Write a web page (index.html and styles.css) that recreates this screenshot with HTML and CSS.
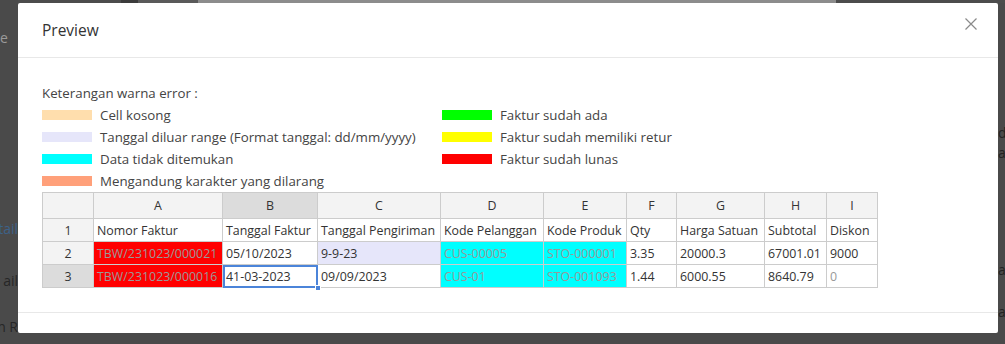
FILE: index.html
```html
<!DOCTYPE html>
<html>
<head>
<meta charset="utf-8">
<link rel="stylesheet" href="styles.css">
</head>
<body>
<div class="page">
  <div class="topstrip">
    <div class="ts ts-dark" style="width:105px"></div>
    <div class="ts ts-line" style="width:17px"></div>
    <div class="ts ts-mid" style="width:61px"></div>
    <div class="ts ts-light" style="width:650px"></div>
    <div class="ts ts-dark" style="width:172px"></div>
  </div>
  <div class="sides">
    <div class="side-left">
      <span class="sl sl-1">e</span>
      <span class="sl sl-2">tail</span>
      <span class="sl sl-3">ail</span>
      <span class="sl sl-4">n R</span>
    </div>
    <div class="side-right">
      <span class="sr sr-1">d</span>
      <span class="sr sr-2">a</span>
      <span class="sr sr-3">a</span>
      <span class="sr sr-4">a</span>
    </div>
  </div>
</div>

<div class="modal">
  <div class="modal-header">
    <h2 class="modal-title">Preview</h2>
    <button class="close" aria-label="Close">
      <svg width="12" height="12" viewBox="0 0 12 12"><path d="M0.5 0.5 L11.5 11.5 M11.5 0.5 L0.5 11.5" stroke="#8a8a8a" stroke-width="1.2" fill="none"/></svg>
    </button>
  </div>
  <div class="modal-body">
    <div class="legend-title">Keterangan warna error :</div>
    <div class="legend">
      <div class="item"><span class="sw c-empty"></span>Cell kosong</div>
      <div class="item"><span class="sw c-range"></span>Tanggal diluar range (Format tanggal: dd/mm/yyyy)</div>
      <div class="item"><span class="sw c-notfound"></span>Data tidak ditemukan</div>
      <div class="item"><span class="sw c-char"></span>Mengandung karakter yang dilarang</div>
      <div class="item"><span class="sw c-exists"></span>Faktur sudah ada</div>
      <div class="item"><span class="sw c-retur"></span>Faktur sudah memiliki retur</div>
      <div class="item"><span class="sw c-lunas"></span>Faktur sudah lunas</div>
    </div>
    <table class="sheet">
      <colgroup>
        <col style="width:51px"><col style="width:129px"><col style="width:95px"><col style="width:123px"><col style="width:103px"><col style="width:83px"><col style="width:50px"><col style="width:88px"><col style="width:62px"><col style="width:51px">
      </colgroup>
      <thead>
        <tr class="colhead">
          <th></th><th>A</th><th class="sel">B</th><th>C</th><th>D</th><th>E</th><th>F</th><th>G</th><th>H</th><th>I</th>
        </tr>
      </thead>
      <tbody>
        <tr>
          <th class="rowhead">1</th>
          <td>Nomor Faktur</td><td>Tanggal Faktur</td><td>Tanggal Pengiriman</td><td>Kode Pelanggan</td><td>Kode Produk</td><td>Qty</td><td>Harga Satuan</td><td>Subtotal</td><td>Diskon</td>
        </tr>
        <tr>
          <th class="rowhead">2</th>
          <td class="ro c-lunas">TBW/231023/000021</td><td>05/10/2023</td><td class="c-range">9-9-23</td><td class="ro c-notfound">CUS-00005</td><td class="ro c-notfound">STO-000001</td><td>3.35</td><td>20000.3</td><td>67001.01</td><td>9000</td>
        </tr>
        <tr>
          <th class="rowhead sel">3</th>
          <td class="ro c-lunas">TBW/231023/000016</td><td class="active">41-03-2023</td><td>09/09/2023</td><td class="ro c-notfound">CUS-01</td><td class="ro c-notfound">STO-001093</td><td>1.44</td><td>6000.55</td><td>8640.79</td><td class="ro">0</td>
        </tr>
      </tbody>
    </table>
  </div>
  <div class="modal-footer"></div>
</div>
</body>
</html>
```

FILE: styles.css
```css
html, body {
  margin: 0;
  padding: 0;
}
body {
  width: 1005px;
  height: 344px;
  overflow: hidden;
  background: #4a4a4a;
  font-family: "Open Sans", "Noto Sans", sans-serif;
  color: #333;
}
.page {
  height: 344px;
  display: flex;
  flex-direction: column;
}
.topstrip {
  display: flex;
  height: 3px;
  padding-left: 18px;
}
.ts { height: 3px; }
.ts-dark { background: #4c4c4c; }
.ts-line { background: #3c3c3c; }
.ts-mid { background: #5a5a5a; }
.ts-light { background: #8c8c8c; }
.sides {
  flex: 1;
  display: flex;
  justify-content: space-between;
}
.side-left {
  width: 18px;
  display: flex;
  flex-direction: column;
  align-items: flex-end;
  font-size: 14px;
  white-space: nowrap;
}
.sl { display: block; line-height: 20px; }
.sl-1 { margin-top: 25px; color: #9a9a9a; align-self: flex-start; }
.sl-2 { margin-top: 171px; color: #3d6289; }
.sl-3 { margin-top: 32px; color: #262626; }
.sl-4 { margin-top: 26px; color: #262626; }
.side-right {
  width: 7px;
  overflow: hidden;
  display: flex;
  flex-direction: column;
  font-size: 14px;
  padding-left: 1px;
}
.sr { display: block; line-height: 20px; color: #222; }
.sr-1 { margin-top: 120px; }
.sr-2 { margin-top: 0; }
.sr-3 { margin-top: 97px; }
.sr-4 { margin-top: 22px; }

.modal {
  position: fixed;
  left: 18px;
  top: 3px;
  width: 980px;
  background: #fff;
  border-radius: 2px;
}
.modal-header {
  height: 54px;
  border-bottom: 1px solid #e8e8e8;
  display: flex;
  justify-content: space-between;
  align-items: center;
  padding: 0 21px 0 24px;
}
.modal-title {
  margin: 0;
  font-size: 15.5px;
  font-weight: 500;
  color: #333;
}
.close {
  align-self: flex-start;
  margin-top: 15px;
  border: 0;
  padding: 0;
  background: none;
  width: 12px;
  height: 12px;
  display: flex;
}
.modal-body {
  padding: 24px 24px 24px 24px;
  font-size: 13.3px;
}
.legend-title {
  line-height: 22px;
  height: 22px;
  color: #444;
}
.legend {
  display: grid;
  grid-template-rows: repeat(4, 22px);
  grid-template-columns: 400px auto;
  grid-auto-flow: column;
}
.item {
  display: flex;
  align-items: center;
  color: #444;
  white-space: nowrap;
}
.sw {
  width: 50px;
  height: 10px;
  margin-right: 8px;
  flex: none;
}
.c-empty { background: #ffdead; }
.c-range { background: #e6e6fa; }
.c-notfound { background: #00ffff; }
.c-char { background: #ffa07a; }
.c-exists { background: #00ff00; }
.c-retur { background: #ffff00; }
.c-lunas { background: #ff0000; }

.sheet {
  border-collapse: collapse;
  table-layout: fixed;
  width: 835px;
  font-size: 12.4px;
}
.sheet th, .sheet td {
  border: 1px solid #cccccc;
  white-space: nowrap;
  overflow: hidden;
  padding: 0 3px;
  height: 22px;
  font-weight: normal;
  color: #333;
}
.sheet td { text-align: left; }
.colhead th {
  height: 25px;
  background: #f3f3f3;
  text-align: center;
}
.sheet th.rowhead {
  background: #f3f3f3;
  text-align: center;
}
.sheet th.sel { background: #dcdcdc; }
.sheet td.ro { color: #999; }
.sheet td.active {
  position: relative;
  outline: 2px solid #4b84d9;
  outline-offset: -2px;
  overflow: visible;
}
.sheet td.active::after {
  content: "";
  position: absolute;
  right: -4px;
  bottom: -4px;
  width: 6px;
  height: 6px;
  background: #4b84d9;
  border: 1px solid #fff;
  box-sizing: border-box;
}
.modal-footer {
  height: 20px;
  border-top: 1px solid #e8e8e8;
}
```
